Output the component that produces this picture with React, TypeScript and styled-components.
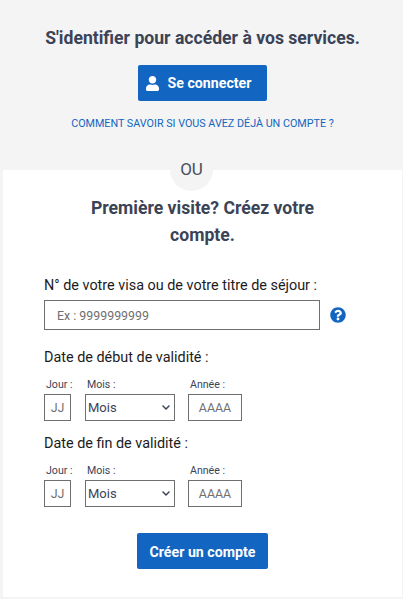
import { FaChevronDown, FaQuestionCircle, FaUser } from 'react-icons/fa'
import styled, { createGlobalStyle } from 'styled-components'

const GlobalStyle = createGlobalStyle`
  html, body {
    margin: 0;
    padding: 0;
    background: #f4f4f4;
  }
  body {
    font-family: Roboto, 'Liberation Sans', sans-serif;
  }
`

const Page = styled.div`
  width: 403px;
  height: 599px;
  overflow: hidden;
  display: flex;
  flex-direction: column;
`
const LoginSection = styled.section`
  height: 170px;
  padding: 26px 0 0 2px;
  box-sizing: border-box;
  display: flex;
  flex-direction: column;
  align-items: center;
`
const Title = styled.h2`
  margin: 0;
  font-weight: 700;
  font-size: 17.6px;
  line-height: 24px;
  color: #3b4357;
  text-align: center;
`
const PrimaryButton = styled.button<{ $width: number }>`
  width: ${({ $width }) => $width}px;
  height: 36px;
  border: 0;
  border-radius: 2px;
  background: #1265c1;
  color: #fff;
  font-family: inherit;
  font-weight: 700;
  font-size: 14.2px;
  display: flex;
  align-items: center;
  justify-content: center;
  gap: 8px;
  padding: 0;
`
const LoginButton = styled(PrimaryButton)`
  margin-top: 15px;
  padding-right: 9px;
`
const HelpLink = styled.a`
  margin-top: 16px;
  font-size: 10.75px;
  line-height: 14px;
  color: #1265c1;
`
const Card = styled.section`
  position: relative;
  width: 399px;
  height: 427px;
  margin-left: 3px;
  box-sizing: border-box;
  padding-top: 25px;
  background: #fff;
`
const OrBadge = styled.div`
  position: absolute;
  top: -22px;
  left: 167px;
  width: 43px;
  height: 43px;
  border-radius: 50%;
  background: #f4f4f4;
  color: #4a4f5c;
  font-size: 17px;
  line-height: 43px;
  text-align: center;
`
const CardTitle = styled(Title)`
  width: 250px;
  margin: 0 auto;
  line-height: 27px;
`
const Form = styled.form`
  margin-top: 28px;
  padding-left: 41px;
  display: flex;
  flex-direction: column;
`
const FieldLabel = styled.label`
  font-size: 14.4px;
  line-height: 18px;
  color: #1c1c1c;
`
const VisaRow = styled.div`
  margin-top: 5px;
  display: flex;
  align-items: center;
  gap: 10px;
`
const TextInput = styled.input<{ $width: number; $center?: boolean }>`
  width: ${({ $width }) => $width}px;
  height: 100%;
  box-sizing: border-box;
  border: 1px solid #6f6f6f;
  border-radius: 0;
  background: #fff;
  padding: 0 ${({ $center }) => ($center ? '0' : '12px')};
  font-family: inherit;
  font-size: 12.4px;
  text-align: ${({ $center }) => ($center ? 'center' : 'left')};
  outline: none;
  &::placeholder {
    color: #6f6f6f;
    opacity: 1;
  }
`
const VisaInput = styled(TextInput)`
  height: 30px;
`
const HelpIcon = styled(FaQuestionCircle)`
  width: 16px;
  height: 16px;
  color: #1265c1;
`
const DateBlock = styled.fieldset<{ $top: number }>`
  margin: ${({ $top }) => $top}px 0 0;
  padding: 0;
  border: 0;
  display: flex;
  flex-direction: column;
`
const DateRow = styled.div`
  margin-top: 11px;
  display: grid;
  grid-template-columns: 41px 103px 54px;
  grid-template-rows: 14px 27px;
  row-gap: 2px;
  grid-auto-flow: column;
`
const DateColumn = styled.div`
  display: contents;
`
const SubLabel = styled.span`
  padding-left: 2px;
  font-size: 10.6px;
  line-height: 14px;
  color: #3b4357;
  white-space: nowrap;
`
const SelectWrap = styled.div`
  position: relative;
  width: 90px;
  height: 27px;
`
const MonthSelect = styled.select`
  width: 100%;
  height: 100%;
  box-sizing: border-box;
  appearance: none;
  border: 1px solid #6f6f6f;
  border-radius: 0;
  background: #fff;
  color: #3b4357;
  padding: 0 0 0 2px;
  font-family: inherit;
  font-size: 13px;
`
const SelectArrow = styled(FaChevronDown)`
  position: absolute;
  top: 9px;
  right: 4px;
  width: 10px;
  height: 9px;
  color: #3b4357;
  pointer-events: none;
`
const SubmitButton = styled(PrimaryButton)`
  margin: 26px 0 0 93px;
  padding-top: 1px;
`

function DateFields({ label, top }: { label: string; top: number }) {
  return (
    <DateBlock $top={top}>
      <FieldLabel>{label}</FieldLabel>
      <DateRow>
        <DateColumn>
          <SubLabel>Jour :</SubLabel>
          <TextInput $width={27} $center placeholder="JJ" />
        </DateColumn>
        <DateColumn>
          <SubLabel>Mois :</SubLabel>
          <SelectWrap>
            <MonthSelect defaultValue="">
              <option value="">Mois</option>
            </MonthSelect>
            <SelectArrow />
          </SelectWrap>
        </DateColumn>
        <DateColumn>
          <SubLabel>Année :</SubLabel>
          <TextInput $width={54} $center placeholder="AAAA" />
        </DateColumn>
      </DateRow>
    </DateBlock>
  )
}

export default function App() {
  return (
    <Page>
      <GlobalStyle />
      <LoginSection>
        <Title>S'identifier pour accéder à vos services.</Title>
        <LoginButton $width={129} type="button">
          <FaUser size={15} />
          Se connecter
        </LoginButton>
        <HelpLink>COMMENT SAVOIR SI VOUS AVEZ DÉJÀ UN COMPTE ?</HelpLink>
      </LoginSection>
      <Card>
        <OrBadge>OU</OrBadge>
        <CardTitle>Première visite? Créez votre compte.</CardTitle>
        <Form>
          <FieldLabel>N° de votre visa ou de votre titre de séjour :</FieldLabel>
          <VisaRow>
            <VisaInput $width={276} placeholder="Ex : 9999999999" />
            <HelpIcon />
          </VisaRow>
          <DateFields label="Date de début de validité :" top={19} />
          <DateFields label="Date de fin de validité :" top={14} />
          <SubmitButton $width={131} type="button">
            Créer un compte
          </SubmitButton>
        </Form>
      </Card>
    </Page>
  )
}
